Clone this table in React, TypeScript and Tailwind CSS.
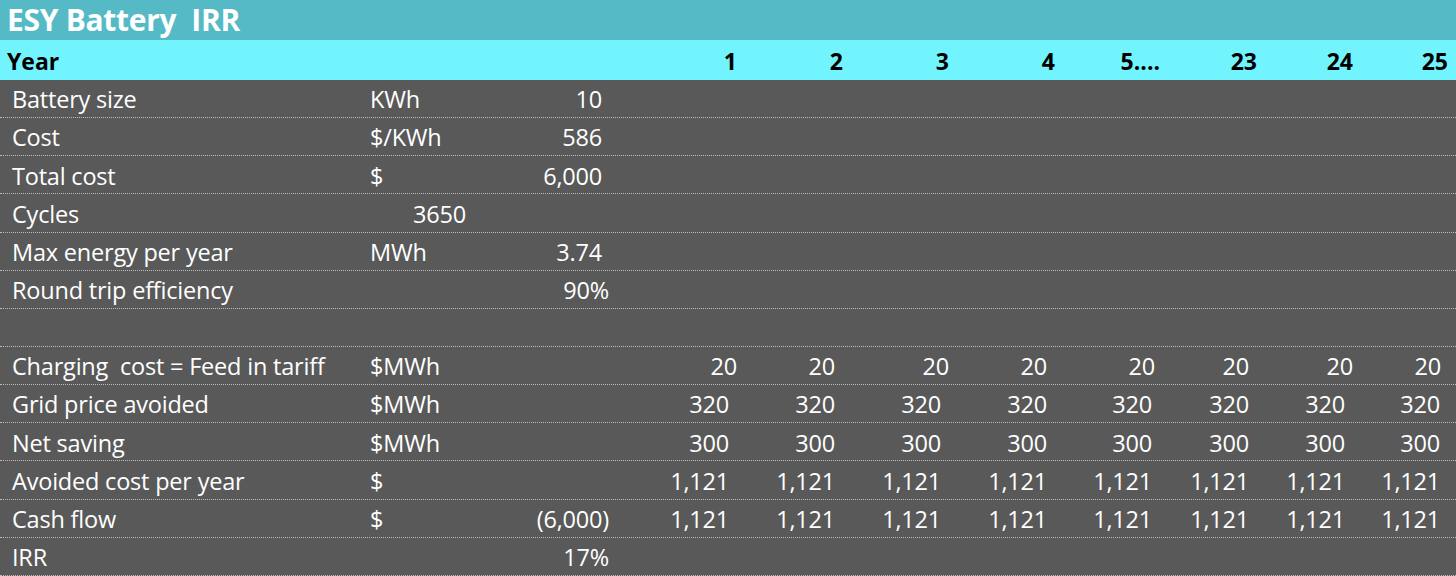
import React from 'react';

type Cell = { t: string; pr?: string };

const yearCols = ['1', '2', '3', '4', '5....', '23', '24', '25'];

const rows: { label: string; unit: string; value?: Cell; unitPad?: string; years?: Cell[] }[] = [
  { label: 'Battery size', unit: 'KWh', value: { t: '10', pr: 'pr-[15px]' } },
  { label: 'Cost', unit: '$/KWh', value: { t: '586', pr: 'pr-[15px]' } },
  { label: 'Total cost', unit: '$', value: { t: '6,000', pr: 'pr-[15px]' } },
  { label: 'Cycles', unit: '3650', unitPad: 'pl-[55px]' },
  { label: 'Max energy per year', unit: 'MWh', value: { t: '3.74', pr: 'pr-[15px]' } },
  { label: 'Round trip efficiency', unit: '', value: { t: '90%', pr: 'pr-2' } },
  { label: '', unit: '' },
  {
    label: 'Charging  cost = Feed in tariff',
    unit: '$MWh',
    years: [
      { t: '20', pr: 'pr-2' },
      { t: '20', pr: 'pr-4' },
      { t: '20', pr: 'pr-2' },
      { t: '20', pr: 'pr-4' },
      { t: '20', pr: 'pr-[13px]' },
      { t: '20', pr: 'pr-4' },
      { t: '20', pr: 'pr-2' },
      { t: '20', pr: 'pr-[15px]' },
    ],
  },
  { label: 'Grid price avoided', unit: '$MWh', years: yearCols.map(() => ({ t: '320' })) },
  { label: 'Net saving', unit: '$MWh', years: yearCols.map(() => ({ t: '300' })) },
  { label: 'Avoided cost per year', unit: '$', years: yearCols.map(() => ({ t: '1,121' })) },
  { label: 'Cash flow', unit: '$', value: { t: '(6,000)', pr: 'pr-2' }, years: yearCols.map(() => ({ t: '1,121' })) },
  { label: 'IRR', unit: '', value: { t: '17%', pr: 'pr-2' } },
];

const grid =
  'grid grid-cols-[358px_140px_119px_128px_106px_106px_106px_105px_97px_96px_95px]';

export default function App() {
  return (
    <div
      className="w-[1456px] h-[576px] overflow-hidden bg-[#595959] text-white"
      style={{ fontFamily: '"Open Sans", Lato, sans-serif' }}
    >
      <div className="h-10 bg-[#55bac6] flex items-center pl-[7px] text-[30px] font-bold leading-none whitespace-pre tracking-[-0.3px]">
        ESY Battery  IRR
      </div>
      <div className={`${grid} h-10 bg-[#71f4fd] text-black font-bold text-[23px] items-center pt-[2px]`}>
        <div className="pl-[7px]">Year</div>
        <div />
        <div />
        {yearCols.map((y) => (
          <div key={y} className="text-right pr-2">
            {y}
          </div>
        ))}
      </div>
      {rows.map((r, i) => (
        <div
          key={i}
          className={`${grid} h-[38.15px] items-center text-[23.5px] leading-none pt-[3px] border-b border-dotted border-[#bdbdbd] whitespace-pre tracking-[-0.2px]`}
        >
          <div className="pl-3">{r.label}</div>
          <div className={r.unitPad ?? 'pl-3'}>{r.unit}</div>
          <div className={`text-right ${r.value?.pr ?? ''}`}>{r.value?.t ?? ''}</div>
          {yearCols.map((_, j) => (
            <div key={j} className={`text-right ${r.years?.[j]?.pr ?? 'pr-4'}`}>
              {r.years?.[j]?.t ?? ''}
            </div>
          ))}
        </div>
      ))}
    </div>
  );
}
